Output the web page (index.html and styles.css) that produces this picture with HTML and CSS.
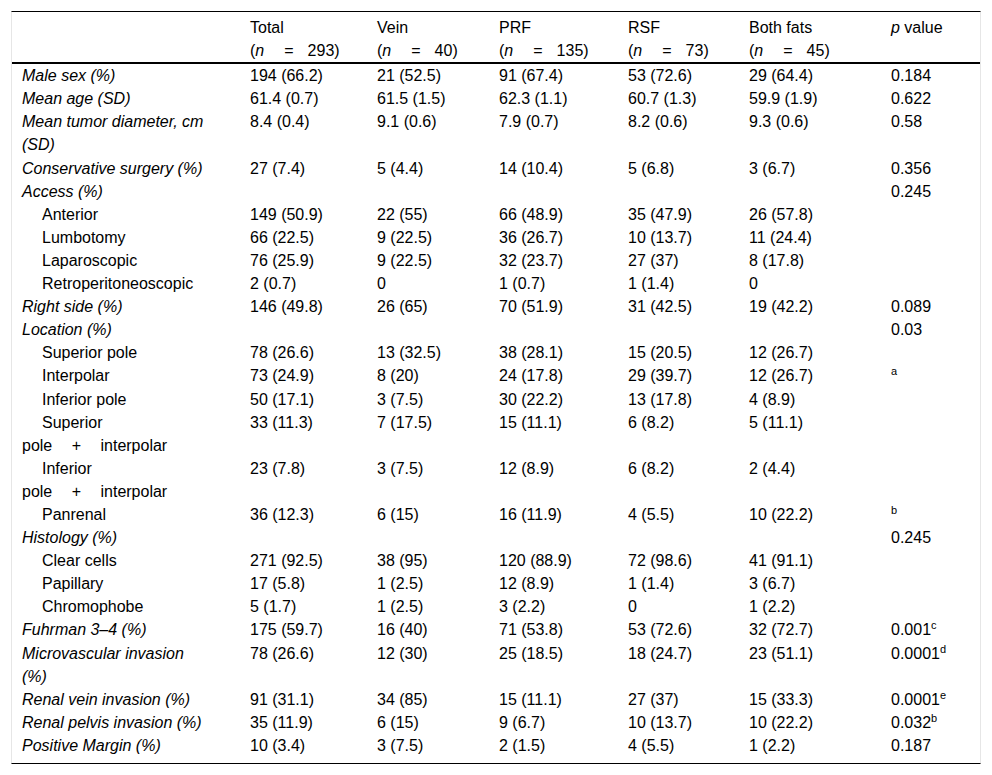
FILE: index.html
```html
<!DOCTYPE html>
<html lang="en">
<head>
<meta charset="utf-8">
<title>Table</title>
<link rel="stylesheet" href="styles.css">
</head>
<body>
<div class="frame">
<table class="data">
<colgroup>
<col class="c-label"><col class="c-total"><col class="c-vein"><col class="c-prf"><col class="c-rsf"><col class="c-both"><col class="c-p">
</colgroup>
<thead>
<tr>
<th class="label"></th>
<th>Total<br><span class="hn">(<i>n</i><span class="sp1"></span>=<span class="sp2"></span>293)</span></th>
<th>Vein<br><span class="hn">(<i>n</i><span class="sp1"></span>=<span class="sp2"></span>40)</span></th>
<th>PRF<br><span class="hn">(<i>n</i><span class="sp1"></span>=<span class="sp2"></span>135)</span></th>
<th>RSF<br><span class="hn">(<i>n</i><span class="sp1"></span>=<span class="sp2"></span>73)</span></th>
<th>Both fats<br><span class="hn">(<i>n</i><span class="sp1"></span>=<span class="sp2"></span>45)</span></th>
<th><i>p</i> value</th>
</tr>
</thead>
<tbody>
<tr><td class="label main">Male sex (%)</td><td>194 (66.2)</td><td>21 (52.5)</td><td>91 (67.4)</td><td>53 (72.6)</td><td>29 (64.4)</td><td>0.184</td></tr>
<tr><td class="label main">Mean age (SD)</td><td>61.4 (0.7)</td><td>61.5 (1.5)</td><td>62.3 (1.1)</td><td>60.7 (1.3)</td><td>59.9 (1.9)</td><td>0.622</td></tr>
<tr><td class="label main">Mean tumor diameter, cm (SD)</td><td>8.4 (0.4)</td><td>9.1 (0.6)</td><td>7.9 (0.7)</td><td>8.2 (0.6)</td><td>9.3 (0.6)</td><td>0.58</td></tr>
<tr><td class="label main">Conservative surgery (%)</td><td>27 (7.4)</td><td>5 (4.4)</td><td>14 (10.4)</td><td>5 (6.8)</td><td>3 (6.7)</td><td>0.356</td></tr>
<tr><td class="label main">Access (%)</td><td></td><td></td><td></td><td></td><td></td><td>0.245</td></tr>
<tr><td class="label sub">Anterior</td><td>149 (50.9)</td><td>22 (55)</td><td>66 (48.9)</td><td>35 (47.9)</td><td>26 (57.8)</td><td></td></tr>
<tr><td class="label sub">Lumbotomy</td><td>66 (22.5)</td><td>9 (22.5)</td><td>36 (26.7)</td><td>10 (13.7)</td><td>11 (24.4)</td><td></td></tr>
<tr><td class="label sub">Laparoscopic</td><td>76 (25.9)</td><td>9 (22.5)</td><td>32 (23.7)</td><td>27 (37)</td><td>8 (17.8)</td><td></td></tr>
<tr><td class="label sub">Retroperitoneoscopic</td><td>2 (0.7)</td><td>0</td><td>1 (0.7)</td><td>1 (1.4)</td><td>0</td><td></td></tr>
<tr><td class="label main">Right side (%)</td><td>146 (49.8)</td><td>26 (65)</td><td>70 (51.9)</td><td>31 (42.5)</td><td>19 (42.2)</td><td>0.089</td></tr>
<tr><td class="label main">Location (%)</td><td></td><td></td><td></td><td></td><td></td><td>0.03</td></tr>
<tr><td class="label sub">Superior pole</td><td>78 (26.6)</td><td>13 (32.5)</td><td>38 (28.1)</td><td>15 (20.5)</td><td>12 (26.7)</td><td></td></tr>
<tr><td class="label sub">Interpolar</td><td>73 (24.9)</td><td>8 (20)</td><td>24 (17.8)</td><td>29 (39.7)</td><td>12 (26.7)</td><td><sup>a</sup></td></tr>
<tr><td class="label sub">Inferior pole</td><td>50 (17.1)</td><td>3 (7.5)</td><td>30 (22.2)</td><td>13 (17.8)</td><td>4 (8.9)</td><td></td></tr>
<tr><td class="label sub">Superior <span class="n">pole + interpolar</span></td><td>33 (11.3)</td><td>7 (17.5)</td><td>15 (11.1)</td><td>6 (8.2)</td><td>5 (11.1)</td><td></td></tr>
<tr><td class="label sub">Inferior <span class="n">pole + interpolar</span></td><td>23 (7.8)</td><td>3 (7.5)</td><td>12 (8.9)</td><td>6 (8.2)</td><td>2 (4.4)</td><td></td></tr>
<tr><td class="label sub">Panrenal</td><td>36 (12.3)</td><td>6 (15)</td><td>16 (11.9)</td><td>4 (5.5)</td><td>10 (22.2)</td><td><sup>b</sup></td></tr>
<tr><td class="label main">Histology (%)</td><td></td><td></td><td></td><td></td><td></td><td>0.245</td></tr>
<tr><td class="label sub">Clear cells</td><td>271 (92.5)</td><td>38 (95)</td><td>120 (88.9)</td><td>72 (98.6)</td><td>41 (91.1)</td><td></td></tr>
<tr><td class="label sub">Papillary</td><td>17 (5.8)</td><td>1 (2.5)</td><td>12 (8.9)</td><td>1 (1.4)</td><td>3 (6.7)</td><td></td></tr>
<tr><td class="label sub">Chromophobe</td><td>5 (1.7)</td><td>1 (2.5)</td><td>3 (2.2)</td><td>0</td><td>1 (2.2)</td><td></td></tr>
<tr><td class="label main">Fuhrman 3–4 (%)</td><td>175 (59.7)</td><td>16 (40)</td><td>71 (53.8)</td><td>53 (72.6)</td><td>32 (72.7)</td><td>0.001<sup>c</sup></td></tr>
<tr><td class="label main">Microvascular invasion (%)</td><td>78 (26.6)</td><td>12 (30)</td><td>25 (18.5)</td><td>18 (24.7)</td><td>23 (51.1)</td><td>0.0001<sup>d</sup></td></tr>
<tr><td class="label main">Renal vein invasion (%)</td><td>91 (31.1)</td><td>34 (85)</td><td>15 (11.1)</td><td>27 (37)</td><td>15 (33.3)</td><td>0.0001<sup>e</sup></td></tr>
<tr><td class="label main">Renal pelvis invasion (%)</td><td>35 (11.9)</td><td>6 (15)</td><td>9 (6.7)</td><td>10 (13.7)</td><td>10 (22.2)</td><td>0.032<sup>b</sup></td></tr>
<tr class="last"><td class="label main">Positive Margin (%)</td><td>10 (3.4)</td><td>3 (7.5)</td><td>2 (1.5)</td><td>4 (5.5)</td><td>1 (2.2)</td><td>0.187</td></tr>
</tbody>
</table>
</div>
</body>
</html>
```
FILE: styles.css
```css
html, body {
  margin: 0;
  padding: 0;
  background: #ffffff;
}

body {
  font-family: "Liberation Sans", Arial, sans-serif;
  font-size: 16px;
  color: #000000;
}

.frame {
  margin: 11px 11px 0 11px;
  border-top: 1px solid #000000;
  border-bottom: 1px solid #000000;
  border-left: 1px solid #e6e6e6;
  border-right: 1px solid #e6e6e6;
}

.data {
  width: 100%;
  table-layout: fixed;
  border-collapse: separate;
  border-spacing: 0;
}

.c-label { width: 228px; }
.c-total { width: 127px; }
.c-vein  { width: 122px; }
.c-prf   { width: 129px; }
.c-rsf   { width: 121px; }
.c-both  { width: 142px; }
.c-p     { width: 99px; }

.data th,
.data td {
  text-align: left;
  vertical-align: top;
  font-weight: normal;
  line-height: 23.1px;
  padding: 0 6px 0 10px;
}

.data th {
  padding-top: 4px;
  padding-bottom: 0;
  border-bottom: 2px solid #000000;
}

.data td.label {
  padding-right: 34px;
}

.data td.main {
  font-style: italic;
}

.data td.sub {
  text-indent: 20px;
}

.n {
  white-space: nowrap;
  word-spacing: 15px;
}

.hn {
  white-space: nowrap;
}

.sp1 {
  display: inline-block;
  width: 20px;
}

.sp2 {
  display: inline-block;
  width: 14px;
}

.data tr.last td {
  padding-bottom: 6px;
}

sup {
  font-size: 11px;
  line-height: 0;
  vertical-align: 6px;
}
```
